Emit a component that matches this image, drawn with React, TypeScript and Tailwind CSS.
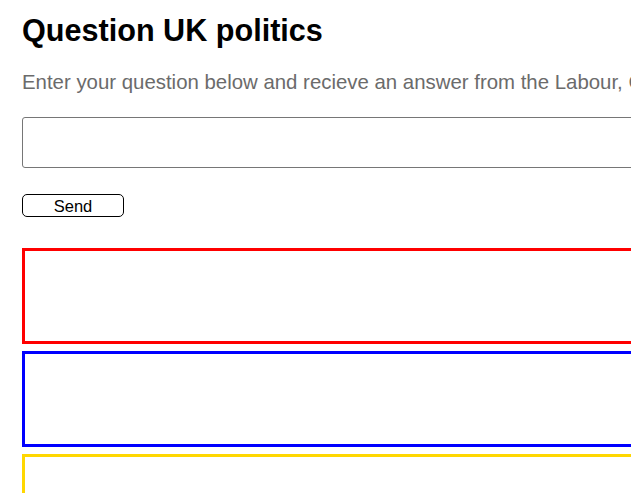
export default function App() {
  return (
    <div className="w-[631px] h-[493px] overflow-hidden bg-white" style={{ fontFamily: '"Liberation Sans", Arial, sans-serif' }}>
      <div className="w-[1200px] pl-[22px] pt-[12px] flex flex-col">
        <h1 className="text-[30.6px] leading-[36px] font-bold text-black">Question UK politics</h1>
        <p className="mt-[20px] text-[20.4px] leading-[28px] text-[#6b6b6b] whitespace-nowrap">
          Enter your question below and recieve an answer from the Labour, Conservative or Liberal Democrat party
        </p>
        <input type="text" className="mt-[21px] h-[51px] w-[1000px] border border-[#767676] rounded-[3px] outline-none" />
        <button className="mt-[26px] w-[102px] h-[23px] border border-black rounded-[5px] text-[16.5px] leading-[20px] text-black bg-white">
          Send
        </button>
        <div className="mt-[31px] flex flex-col gap-[7px]">
          <div className="h-[96px] w-[1000px] border-[3px] border-[#ff0000]" />
          <div className="h-[96px] w-[1000px] border-[3px] border-[#0000ff]" />
          <div className="h-[96px] w-[1000px] border-[3px] border-[#ffd700]" />
        </div>
      </div>
    </div>
  );
}
